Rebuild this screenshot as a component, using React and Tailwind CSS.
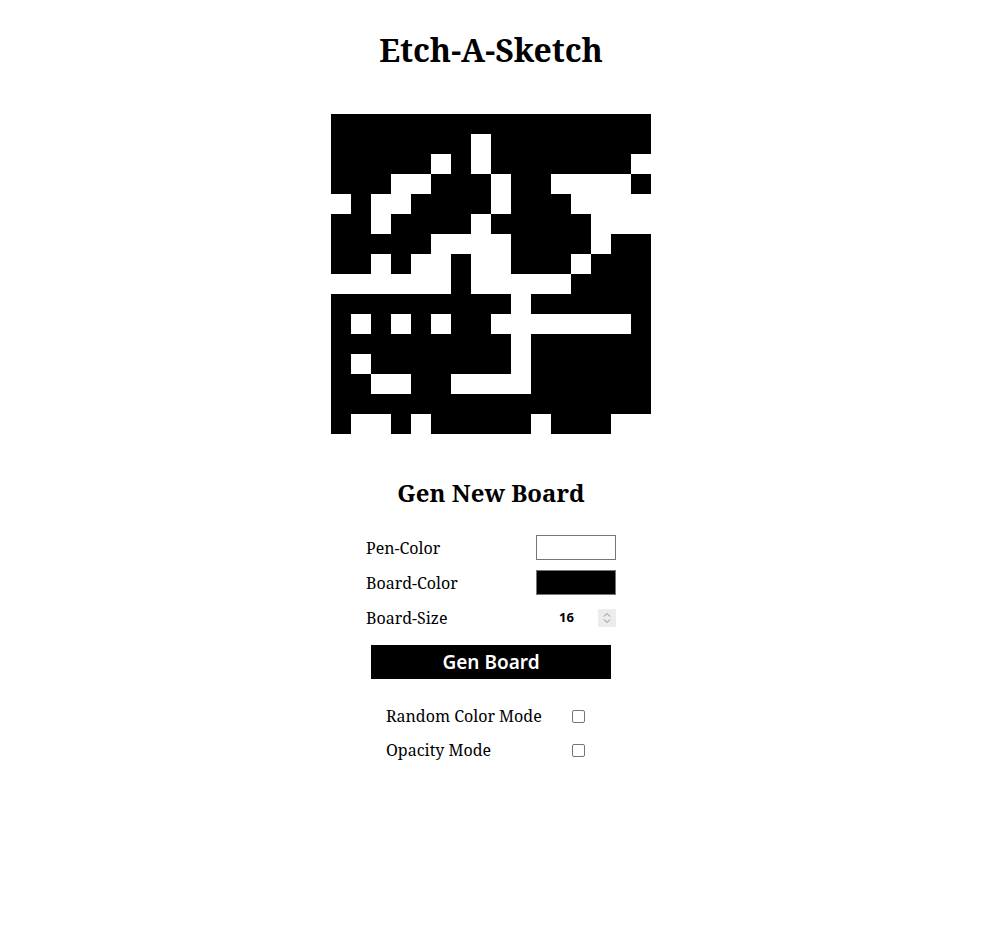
import React from "react";

const ROWS = [
  "1111111111111111",
  "1111111011111111",
  "1111101011111110",
  "1110011101100001",
  "0100111101110000",
  "1101111011111000",
  "1111100001111011",
  "1101001001110111",
  "0000001000001111",
  "1111111110111111",
  "1010101100000001",
  "1111111110111111",
  "1011111110111111",
  "1100110000111111",
  "1111111111111111",
  "1001011111011100",
];

const serif = { fontFamily: '"Noto Serif", "DejaVu Serif", serif' };

export default function App() {
  return (
    <div className="flex flex-col items-center bg-white min-h-[950px] pr-[1px] text-black" style={serif}>
      <h1 className="text-[32px] font-bold leading-[43px] mt-[28px] font-['Noto_Serif','DejaVu_Serif',serif]">
        Etch-A-Sketch
      </h1>
      <div className="mt-[43px] grid grid-cols-[repeat(16,20px)] w-[320px] h-[320px]">
        {ROWS.join("").split("").map((c, i) => (
          <div key={i} className={c === "1" ? "w-[20px] h-[20px] bg-black" : "w-[20px] h-[20px] bg-white"} />
        ))}
      </div>
      <h2 className="mt-[43px] text-[24px] font-bold leading-[32px]">Gen New Board</h2>
      <div className="mt-[26px] w-[250px] flex flex-col gap-[10px] text-[16px]">
        <div className="flex items-center justify-between h-[25px]">
          <span>Pen-Color</span>
          <div className="w-[80px] h-[25px] border border-[#767676] bg-white" />
        </div>
        <div className="flex items-center justify-between h-[25px]">
          <span>Board-Color</span>
          <div className="w-[80px] h-[25px] border border-[#767676] bg-black" />
        </div>
        <div className="flex items-center justify-between h-[25px]">
          <span>Board-Size</span>
          <div className="flex items-center w-[60px] h-[20px]">
            <span className="ml-[3px] text-[13px] font-bold font-['Noto_Sans',sans-serif] w-[39px]">16</span>
            <div className="w-[18px] h-[18px] bg-[#ececec] flex items-center justify-center">
              <svg width="10" height="14" viewBox="0 0 10 14" fill="none" stroke="#8a8a8a" strokeWidth="1">
                <path d="M2 5.5 L5 2.5 L8 5.5" />
                <path d="M2 8.5 L5 11.5 L8 8.5" />
              </svg>
            </div>
          </div>
        </div>
      </div>
      <button className="mt-[15px] w-[240px] h-[34px] bg-black text-white text-[19px] font-semibold font-['Noto_Sans',sans-serif] flex items-center justify-center">
        Gen Board
      </button>
      <div className="mt-[27px] w-[250px] px-[20px] flex flex-col gap-[14px] text-[16px]">
        <div className="flex items-center justify-between h-[20px]">
          <span>Random Color Mode</span>
          <div className="w-[13px] h-[13px] border border-[#767676] rounded-[2px] bg-white mr-[11px]" />
        </div>
        <div className="flex items-center justify-between h-[20px]">
          <span>Opacity Mode</span>
          <div className="w-[13px] h-[13px] border border-[#767676] rounded-[2px] bg-white mr-[11px]" />
        </div>
      </div>
    </div>
  );
}
